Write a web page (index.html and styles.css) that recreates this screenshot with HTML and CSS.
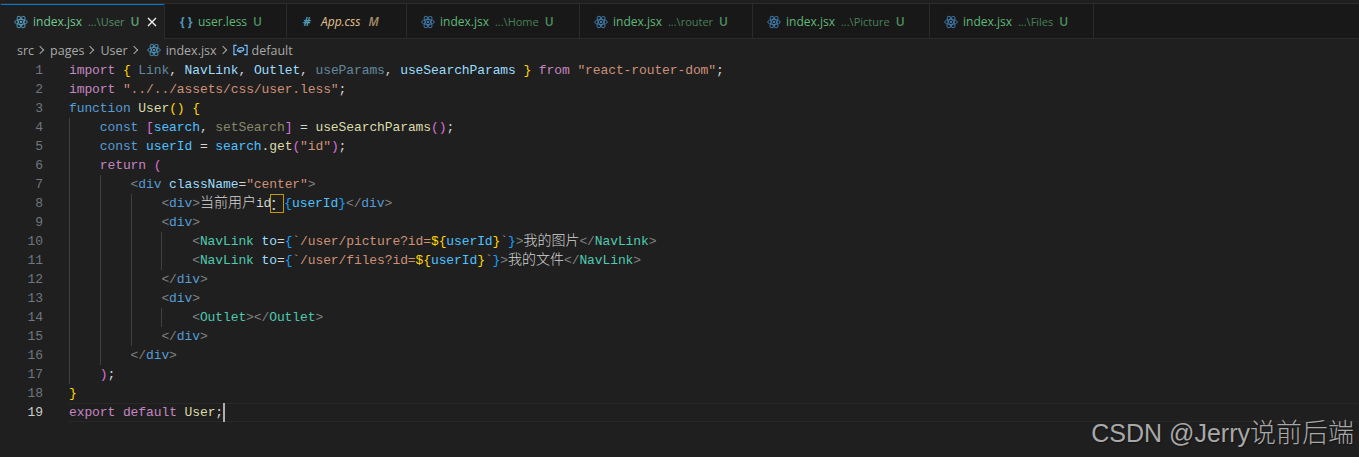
FILE: index.html
```html
<!DOCTYPE html>
<html lang="en">
<head>
  <meta charset="UTF-8" />
  <title>index.jsx - User</title>
  <link rel="stylesheet" href="styles.css">
</head>
<body>
  <svg class="defs" width="0" height="0">
    <symbol id="react" viewBox="0 0 16 16">
      <g fill="none" stroke="currentColor" stroke-width="1.1">
        <ellipse cx="8" cy="8" rx="7.2" ry="2.9"/>
        <ellipse cx="8" cy="8" rx="7.2" ry="2.9" transform="rotate(60 8 8)"/>
        <ellipse cx="8" cy="8" rx="7.2" ry="2.9" transform="rotate(120 8 8)"/>
      </g>
      <circle cx="8" cy="8" r="1.4" fill="currentColor"/>
    </symbol>
  </svg>

  <div class="tabs">
    <div class="tab active">
      <svg class="icon"><use href="#react"/></svg>
      <span class="name">index.jsx</span><span class="desc">...\User</span><span class="badge">U</span>
      <svg class="close" viewBox="0 0 10 10"><path d="M1 1l8 8M9 1l-8 8"/></svg>
    </div>
    <div class="tab">
      <span class="glyph">{ }</span>
      <span class="name">user.less</span><span class="badge">U</span>
    </div>
    <div class="tab modified">
      <span class="glyph hash">#</span>
      <span class="name">App.css</span><span class="badge">M</span>
    </div>
    <div class="tab">
      <svg class="icon"><use href="#react"/></svg>
      <span class="name">index.jsx</span><span class="desc">...\Home</span><span class="badge">U</span>
    </div>
    <div class="tab">
      <svg class="icon"><use href="#react"/></svg>
      <span class="name">index.jsx</span><span class="desc">...\router</span><span class="badge">U</span>
    </div>
    <div class="tab">
      <svg class="icon"><use href="#react"/></svg>
      <span class="name">index.jsx</span><span class="desc">...\Picture</span><span class="badge">U</span>
    </div>
    <div class="tab">
      <svg class="icon"><use href="#react"/></svg>
      <span class="name">index.jsx</span><span class="desc">...\Files</span><span class="badge">U</span>
    </div>
  </div>

  <div class="crumbs">
    <span>src</span><span class="sep"></span>
    <span>pages</span><span class="sep"></span>
    <span>User</span><span class="sep"></span>
    <svg class="icon"><use href="#react"/></svg>
    <span>index.jsx</span><span class="sep"></span>
    <svg class="symbol" viewBox="0 0 16 12"><path d="M4 1H1v10h3M12 1h3v10h-3" fill="none" stroke="#75beff" stroke-width="1.3"/><path d="M4.500 7.500c0-2.500 2-4 4-4s3 .8 3 2-1 1.500-2 1.500-2.500-.3-3.500 0 1 1.500 3 1.500" fill="none" stroke="#75beff" stroke-width="1.300"/></svg>
    <span>default</span>
  </div>

  <div class="editor">
    <div class="line"><span class="num">1</span><span class="code"><span class="k">import</span> <span class="b1">{</span> <span class="dim">Link</span>, <span class="v">NavLink</span>, <span class="v">Outlet</span>, <span class="dim">useParams</span>, <span class="v">useSearchParams</span> <span class="b1">}</span> <span class="k">from</span> <span class="s">"react-router-dom"</span>;</span></div>
    <div class="line"><span class="num">2</span><span class="code"><span class="k">import</span> <span class="s">"../../assets/css/user.less"</span>;</span></div>
    <div class="line"><span class="num">3</span><span class="code"><span class="t">function</span> <span class="f">User</span><span class="b1">()</span> <span class="b1">{</span></span></div>
    <div class="line"><span class="num">4</span><span class="code"><span class="ind"></span><span class="t">const</span> <span class="b2">[</span><span class="c">search</span>, <span class="f dimf">setSearch</span><span class="b2">]</span> = <span class="f">useSearchParams</span><span class="b2">()</span>;</span></div>
    <div class="line"><span class="num">5</span><span class="code"><span class="ind"></span><span class="t">const</span> <span class="c">userId</span> = <span class="c">search</span>.<span class="f">get</span><span class="b2">(</span><span class="s">"id"</span><span class="b2">)</span>;</span></div>
    <div class="line"><span class="num">6</span><span class="code"><span class="ind"></span><span class="k">return</span> <span class="b2">(</span></span></div>
    <div class="line"><span class="num">7</span><span class="code"><span class="ind"></span><span class="ind"></span><span class="g">&lt;</span><span class="t">div</span> <span class="v">className</span>=<span class="s">"center"</span><span class="g">&gt;</span></span></div>
    <div class="line"><span class="num">8</span><span class="code"><span class="ind"></span><span class="ind"></span><span class="ind"></span><span class="g">&lt;</span><span class="t">div</span><span class="g">&gt;</span><span class="cjk">当前用户</span>id<span class="ambig">：</span><span class="b3">{</span><span class="c">userId</span><span class="b3">}</span><span class="g">&lt;/</span><span class="t">div</span><span class="g">&gt;</span></span></div>
    <div class="line"><span class="num">9</span><span class="code"><span class="ind"></span><span class="ind"></span><span class="ind"></span><span class="g">&lt;</span><span class="t">div</span><span class="g">&gt;</span></span></div>
    <div class="line"><span class="num">10</span><span class="code"><span class="ind"></span><span class="ind"></span><span class="ind"></span><span class="ind"></span><span class="g">&lt;</span><span class="n">NavLink</span> <span class="v">to</span>=<span class="b3">{</span><span class="s">`/user/picture?id=</span><span class="b1">${</span><span class="c">userId</span><span class="b1">}</span><span class="s">`</span><span class="b3">}</span><span class="g">&gt;</span><span class="cjk">我的图片</span><span class="g">&lt;/</span><span class="n">NavLink</span><span class="g">&gt;</span></span></div>
    <div class="line"><span class="num">11</span><span class="code"><span class="ind"></span><span class="ind"></span><span class="ind"></span><span class="ind"></span><span class="g">&lt;</span><span class="n">NavLink</span> <span class="v">to</span>=<span class="b3">{</span><span class="s">`/user/files?id=</span><span class="b1">${</span><span class="c">userId</span><span class="b1">}</span><span class="s">`</span><span class="b3">}</span><span class="g">&gt;</span><span class="cjk">我的文件</span><span class="g">&lt;/</span><span class="n">NavLink</span><span class="g">&gt;</span></span></div>
    <div class="line"><span class="num">12</span><span class="code"><span class="ind"></span><span class="ind"></span><span class="ind"></span><span class="g">&lt;/</span><span class="t">div</span><span class="g">&gt;</span></span></div>
    <div class="line"><span class="num">13</span><span class="code"><span class="ind"></span><span class="ind"></span><span class="ind"></span><span class="g">&lt;</span><span class="t">div</span><span class="g">&gt;</span></span></div>
    <div class="line"><span class="num">14</span><span class="code"><span class="ind"></span><span class="ind"></span><span class="ind"></span><span class="ind"></span><span class="g">&lt;</span><span class="n">Outlet</span><span class="g">&gt;&lt;/</span><span class="n">Outlet</span><span class="g">&gt;</span></span></div>
    <div class="line"><span class="num">15</span><span class="code"><span class="ind"></span><span class="ind"></span><span class="ind"></span><span class="g">&lt;/</span><span class="t">div</span><span class="g">&gt;</span></span></div>
    <div class="line"><span class="num">16</span><span class="code"><span class="ind"></span><span class="ind"></span><span class="g">&lt;/</span><span class="t">div</span><span class="g">&gt;</span></span></div>
    <div class="line"><span class="num">17</span><span class="code"><span class="ind"></span><span class="b2">)</span>;</span></div>
    <div class="line"><span class="num">18</span><span class="code"><span class="b1">}</span></span></div>
    <div class="line current"><span class="num">19</span><span class="code"><span class="k">export</span> <span class="k">default</span> <span class="f">User</span>;<span class="cursor"></span></span></div>
  </div>

  <div class="watermark">CSDN @Jerry<span class="wm-cjk">说前后端</span></div>
</body>
</html>
```

FILE: styles.css
```css
body {
  margin: 0;
  height: 457px;
  overflow: hidden;
  position: relative;
  background: #1f1f1f;
  color: #cccccc;
  font-family: "Open Sans", "Noto Sans", sans-serif;
  font-size: 12px;
}

.defs {
  position: absolute;
}

.tabs {
  display: grid;
  grid-template-columns: 165px 122px 120px 173px 173px 177px 164px 1fr;
  margin-top: 3px;
  height: 36px;
  box-sizing: border-box;
  background: #181818;
  border-top: 1px solid #2b2b2b;
  border-bottom: 1px solid #2b2b2b;
}

.tab {
  display: flex;
  align-items: center;
  padding-left: 14px;
  border-right: 1px solid #2b2b2b;
  margin-bottom: -1px;
  color: #60b878;
  white-space: nowrap;
}

.tab.active {
  position: relative;
  background: #1f1f1f;
  color: #73c991;
}

.tab.active::before {
  content: "";
  position: absolute;
  left: 1px;
  right: 0;
  top: 0;
  height: 1px;
  background: #0078d4;
}

.tab .icon {
  color: #3f79a8;
  margin-right: 5px;
}

.tab.active .icon {
  color: #519aba;
}

.icon {
  width: 14px;
  height: 14px;
  flex: none;
  color: #4d8fb5;
}

.glyph {
  width: 13px;
  margin-left: 1px;
  margin-right: 5px;
  color: #519aba;
  font-weight: 700;
  font-size: 12px;
  white-space: nowrap;
}

.desc {
  margin-left: 6px;
  font-size: 11px;
  opacity: 0.65;
}

.badge {
  margin-left: 6px;
  font-weight: 600;
  opacity: 0.75;
}

.modified {
  color: #e2c08d;
  font-style: italic;
  padding-left: 15px;
}

.modified .badge {
  margin-left: 8px;
  opacity: 0.7;
}

.close {
  width: 10px;
  height: 10px;
  margin-left: 7px;
  stroke: #f0f0f0;
  stroke-width: 1.4;
  fill: none;
}

.crumbs {
  display: flex;
  align-items: center;
  height: 22px;
  padding-left: 17px;
  color: #a9a9a9;
  font-size: 12.5px;
}

.crumbs .icon {
  margin-left: 3px;
  margin-right: 5px;
}

.sep {
  width: 5px;
  height: 5px;
  margin: 0 7px 0 3px;
  border-top: 1px solid #a9a9a9;
  border-right: 1px solid #a9a9a9;
  transform: rotate(45deg);
}

.symbol {
  width: 15px;
  height: 12px;
  margin-right: 4px;
}

.editor {
  font-family: "Liberation Mono", monospace;
  font-size: 13px;
  letter-spacing: -0.1px;
  line-height: 19px;
  color: #d4d4d4;
}

.line {
  display: flex;
  height: 19px;
}

.num {
  width: 43px;
  margin-right: 26px;
  text-align: right;
  color: #6e7681;
  flex: none;
}

.current .num {
  color: #cccccc;
}

.code {
  flex: 1;
  white-space: pre;
}

.current .code {
  box-shadow: inset 0 1px #282828, inset 0 -1px #282828;
}

.ind {
  display: inline-block;
  width: 30.8px;
  height: 19px;
  vertical-align: top;
  box-shadow: inset 1px 0 #404040;
}

.cursor {
  display: inline-block;
  width: 2px;
  height: 19px;
  vertical-align: top;
  background: #aeafad;
}

.cjk {
  font-family: "Noto Sans CJK SC", sans-serif;
  font-size: 14px;
  font-weight: 300;
  letter-spacing: 0;
  line-height: 1;
}

.ambig {
  display: inline-block;
  box-sizing: border-box;
  width: 14px;
  height: 19px;
  vertical-align: top;
  border: 1px solid #c09a00;
  font-family: "Noto Sans CJK SC", sans-serif;
  font-size: 14px;
  line-height: 17px;
  letter-spacing: 0;
  margin-left: -1px;
  text-indent: -1px;
  overflow: hidden;
}

.k { color: #c586c0; }
.t { color: #569cd6; }
.s { color: #ce9178; }
.f { color: #dcdcaa; }
.v { color: #9cdcfe; }
.c { color: #4fc1ff; }
.n { color: #4ec9b0; }
.g { color: #808080; }
.dim { color: #9cdcfe; opacity: 0.55; }
.dimf { opacity: 0.55; }
.b1 { color: #ffd700; }
.b2 { color: #da70d6; }
.b3 { color: #179fff; }

.watermark {
  position: absolute;
  right: 5px;
  top: 415px;
  font-family: "Liberation Sans", "Noto Sans CJK SC", sans-serif;
  font-size: 25px;
  line-height: 32px;
  white-space: nowrap;
  color: #a8a8a8;
  text-shadow: 1px 1px 1px #141414;
}

.wm-cjk {
  font-family: "Noto Sans CJK SC", sans-serif;
  font-size: 26px;
  font-weight: 300;
}
```
